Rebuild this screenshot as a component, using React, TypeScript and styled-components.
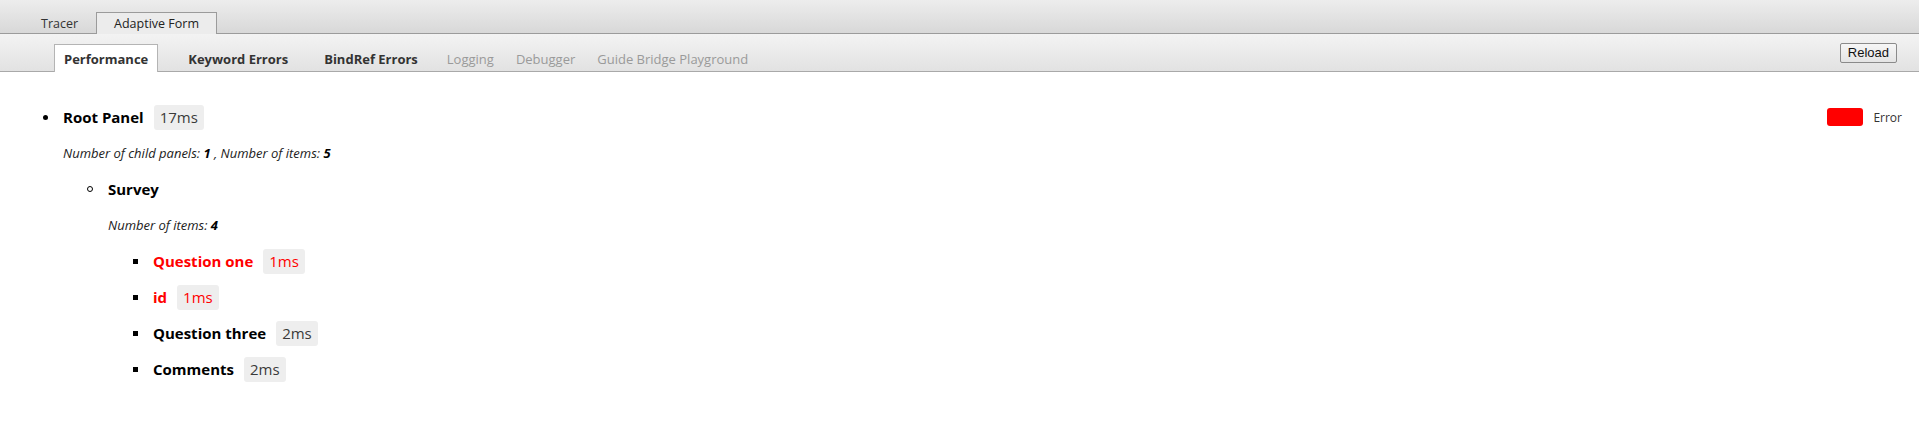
import React from "react";
import styled, { createGlobalStyle, css } from "styled-components";

type Shape = "disc" | "circle" | "square";

interface TreeNode {
  name: string;
  time?: string;
  error?: boolean;
  info?: React.ReactNode;
  children?: TreeNode[];
}

const tree: TreeNode = {
  name: "Root Panel",
  time: "17ms",
  info: (
    <>
      Number of child panels: <b>1</b> , Number of items: <b>5</b>
    </>
  ),
  children: [
    {
      name: "Survey",
      info: (
        <>
          Number of items: <b>4</b>
        </>
      ),
      children: [
        { name: "Question one", time: "1ms", error: true },
        { name: "id", time: "1ms", error: true },
        { name: "Question three", time: "2ms" },
        { name: "Comments", time: "2ms" }
      ]
    }
  ]
};

const shapes: Shape[] = ["disc", "circle", "square"];

const topTabs = [
  { label: "Tracer", active: false },
  { label: "Adaptive Form", active: true }
];

const navTabs: { label: string; kind: "active" | "bold" | "muted" }[] = [
  { label: "Performance", kind: "active" },
  { label: "Keyword Errors", kind: "bold" },
  { label: "BindRef Errors", kind: "bold" },
  { label: "Logging", kind: "muted" },
  { label: "Debugger", kind: "muted" },
  { label: "Guide Bridge Playground", kind: "muted" }
];

/**
 * One entry of the performance tree, with its children below it.
 */
const Node: React.FC<{ node: TreeNode; depth: number }> = ({ node, depth }) => (
  <Item>
    <Header>
      <Marker>
        <Bullet shape={shapes[depth % shapes.length]} />
      </Marker>
      <Title error={node.error}>{node.name}</Title>
      {node.time && <Time error={node.error}>{node.time}</Time>}
    </Header>
    {node.info && <Info>{node.info}</Info>}
    {node.children && (
      <Children>
        {node.children.map(child => (
          <Node key={child.name} node={child} depth={depth + 1} />
        ))}
      </Children>
    )}
  </Item>
);

const App: React.FC = () => (
  <>
    <GlobalStyle />
    <TopBar>
      {topTabs.map(tab => (
        <TopTab key={tab.label} active={tab.active}>
          {tab.label}
        </TopTab>
      ))}
    </TopBar>
    <NavBar>
      <NavList>
        {navTabs.map(tab => (
          <NavTab key={tab.label} kind={tab.kind}>
            {tab.label}
          </NavTab>
        ))}
      </NavList>
      <ReloadButton>Reload</ReloadButton>
    </NavBar>
    <Content>
      <Tree>
        <Node node={tree} depth={0} />
      </Tree>
      <Legend>
        <Swatch />
        <span>Error</span>
      </Legend>
    </Content>
  </>
);

const GlobalStyle = createGlobalStyle`
  body {
    margin: 0;
    background: #fff;
    font-family: "Open Sans", "Noto Sans", sans-serif;
    color: #111;
  }
`;

const TopBar = styled.div`
  display: flex;
  align-items: flex-end;
  height: 33px;
  padding-left: 23px;
  background: linear-gradient(#ededed, #d8d8d8);
  border-bottom: 1px solid #9b9b9b;
`;

const TopTab = styled.div<{ active?: boolean }>`
  height: 21px;
  line-height: 22px;
  padding: 0 17px;
  font-size: 12.5px;
  color: #333;
  margin-bottom: -1px;
  border: 1px solid transparent;
  border-bottom: none;
  ${p =>
    p.active &&
    css`
      background: #ececec;
      border-color: #9b9b9b;
      color: #222;
    `}
`;

const NavBar = styled.div`
  display: flex;
  align-items: stretch;
  justify-content: space-between;
  height: 37px;
  padding-left: 54px;
  padding-right: 22px;
  background: linear-gradient(#f3f3f3, #e2e2e2);
  border-bottom: 1px solid #a9a9a9;
`;

const NavList = styled.div`
  display: flex;
  align-items: flex-end;
`;

const NavTab = styled.div<{ kind: "active" | "bold" | "muted" }>`
  height: 27px;
  line-height: 29px;
  font-size: 13px;
  margin-bottom: -1px;
  padding: 0 11px;
  color: #9a9a9a;
  ${p =>
    p.kind === "active" &&
    css`
      padding: 0 9px;
      margin-right: 12px;
      background: #fff;
      border: 1px solid #b4b4b4;
      border-bottom: none;
      font-weight: 700;
      color: #333;
    `}
  ${p =>
    p.kind === "bold" &&
    css`
      padding: 0 18px;
      font-weight: 700;
      color: #333;
    `}
`;

const ReloadButton = styled.button`
  align-self: center;
  height: 20px;
  padding: 0 7px;
  font-family: "Liberation Sans", Arial, sans-serif;
  font-size: 13px;
  color: #111;
  background: linear-gradient(#f6f6f6, #e4e4e4);
  border: 1px solid #8a8a8a;
  border-radius: 2px;
`;

const Content = styled.div`
  display: flex;
  justify-content: space-between;
  align-items: flex-start;
  padding: 27px 17px 0 36px;
`;

const Tree = styled.ul`
  list-style: none;
  margin: 0;
  padding: 0;
`;

const Item = styled.li`
  margin: 0;
`;

const Children = styled.ul`
  list-style: none;
  margin: 0;
  padding-left: 45px;
`;

const Header = styled.div`
  display: flex;
  align-items: center;
  height: 36px;
`;

const Marker = styled.span`
  display: flex;
  justify-content: center;
  width: 18px;
  margin-right: 9px;
`;

const Bullet = styled.span<{ shape: Shape }>`
  box-sizing: border-box;
  width: 5px;
  height: 5px;
  background: #000;
  ${p =>
    p.shape === "disc" &&
    css`
      border-radius: 50%;
    `}
  ${p =>
    p.shape === "circle" &&
    css`
      width: 6px;
      height: 6px;
      background: transparent;
      border: 1.5px solid #000;
      border-radius: 50%;
    `}
`;

const Title = styled.span<{ error?: boolean }>`
  font-size: 15px;
  font-weight: 700;
  color: ${p => (p.error ? "#ff0000" : "#000")};
`;

const Time = styled.span<{ error?: boolean }>`
  margin-left: 10px;
  height: 25px;
  line-height: 25px;
  padding: 0 6px;
  border-radius: 3px;
  background: #eeeeee;
  font-size: 15px;
  color: ${p => (p.error ? "#ff0000" : "#3a3a3a")};
`;

const Info = styled.div`
  height: 36px;
  line-height: 36px;
  margin-left: 27px;
  font-size: 13px;
  font-style: italic;
  color: #222;

  b {
    color: #000;
  }
`;

const Legend = styled.div`
  display: flex;
  align-items: center;
  gap: 10px;
  height: 36px;
  font-size: 12px;
  color: #333;
`;

const Swatch = styled.span`
  width: 36px;
  height: 18px;
  border-radius: 3px;
  background: #ff0000;
`;

export default App;
